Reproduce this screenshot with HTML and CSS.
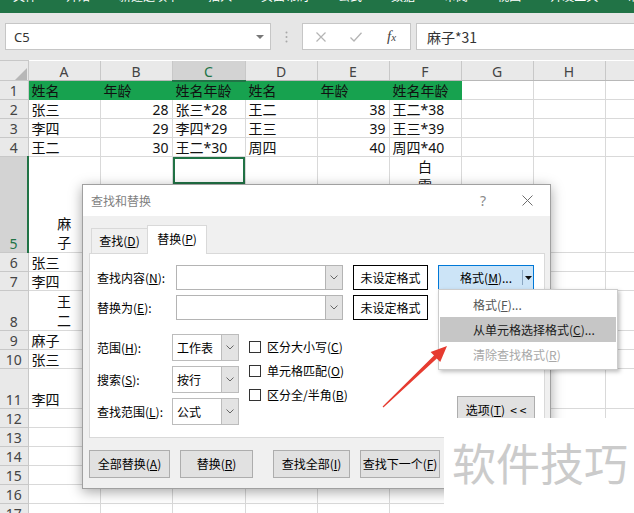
FILE: index.html
```html
<!DOCTYPE html>
<html lang="zh">
<head>
<meta charset="utf-8">
<title>查找和替换</title>
<link rel="stylesheet" href="styles.css">
</head>
<body>
<div class="ribbon">
  <span>文件</span><span>开始</span><span>新建选项卡</span><span>插入</span><span>页面布局</span><span>公式</span><span>数据</span><span>审阅</span><span>视图</span><span>开发工具</span><span>帮助</span>
</div>
<div class="fbar">
  <div class="namebox"><span>C5</span><svg width="8" height="4" viewBox="0 0 8 4"><path d="M0 0H8L4 4Z" fill="#777"/></svg></div>
  <div class="sep"><svg width="3" height="12" viewBox="0 0 3 12"><circle cx="1.5" cy="1.5" r="1" fill="#a8a8a8"/><circle cx="1.5" cy="6" r="1" fill="#a8a8a8"/><circle cx="1.5" cy="10.5" r="1" fill="#a8a8a8"/></svg></div>
  <div class="fbtns">
    <svg class="ic-x" width="10" height="10" viewBox="0 0 10 10"><path d="M0.5 0.5L9.5 9.5M9.5 0.5L0.5 9.5" stroke="#b4b4b4" stroke-width="1.2"/></svg>
    <svg class="ic-ok" width="12" height="10" viewBox="0 0 12 10"><path d="M0.5 5.5L4 9L11.5 0.8" fill="none" stroke="#b4b4b4" stroke-width="1.3"/></svg>
    <span class="fx"><i>f</i><i class="sx">x</i></span>
  </div>
  <div class="finput">麻子*31</div>
</div>

<table class="sheet">
  <colgroup>
    <col class="w-rh"><col class="w-c"><col class="w-c"><col class="w-cc"><col class="w-c"><col class="w-c"><col class="w-c"><col class="w-c"><col class="w-c"><col class="w-r">
  </colgroup>
  <tr class="h20">
    <th class="corner"><svg width="12" height="12" viewBox="0 0 12 12"><path d="M12 0V12H0Z" fill="#b7b7b7"/></svg></th>
    <th class="ch">A</th><th class="ch">B</th><th class="ch act">C</th><th class="ch">D</th><th class="ch">E</th><th class="ch">F</th><th class="ch">G</th><th class="ch">H</th><th class="ch"></th>
  </tr>
  <tr class="h19"><th>1</th><td class="g">姓名</td><td class="g">年龄</td><td class="g">姓名年龄</td><td class="g">姓名</td><td class="g">年龄</td><td class="g">姓名年龄</td><td></td><td></td><td></td></tr>
  <tr class="h19"><th>2</th><td>张三</td><td class="n">28</td><td>张三*28</td><td>王二</td><td class="n">38</td><td>王二*38</td><td></td><td></td><td></td></tr>
  <tr class="h19"><th>3</th><td>李四</td><td class="n">29</td><td>李四*29</td><td>王三</td><td class="n">39</td><td>王三*39</td><td></td><td></td><td></td></tr>
  <tr class="h19"><th>4</th><td>王二</td><td class="n">30</td><td>王二*30</td><td>周四</td><td class="n">40</td><td>周四*40</td><td></td><td></td><td></td></tr>
  <tr class="h96"><th class="ract">5</th><td class="c">麻<br>子</td><td></td><td class="sel"></td><td></td><td></td><td class="c">白<br>雪<br>*<br>4<br>1</td><td></td><td></td><td></td></tr>
  <tr class="h19"><th>6</th><td>张三</td><td></td><td></td><td></td><td></td><td></td><td></td><td></td><td></td></tr>
  <tr class="h19"><th>7</th><td>李四</td><td></td><td></td><td></td><td></td><td></td><td></td><td></td><td></td></tr>
  <tr class="h40"><th>8</th><td class="c">王<br>二</td><td></td><td></td><td></td><td></td><td></td><td></td><td></td><td></td></tr>
  <tr class="h19"><th>9</th><td>麻子</td><td></td><td></td><td></td><td></td><td></td><td></td><td></td><td></td></tr>
  <tr class="h19"><th>10</th><td>张三</td><td></td><td></td><td></td><td></td><td></td><td></td><td></td><td></td></tr>
  <tr class="h40"><th>11</th><td>李四</td><td></td><td></td><td></td><td></td><td></td><td></td><td></td><td></td></tr>
  <tr class="h19"><th>12</th><td></td><td></td><td></td><td></td><td></td><td></td><td></td><td></td><td></td></tr>
  <tr class="h19"><th>13</th><td></td><td></td><td></td><td></td><td></td><td></td><td></td><td></td><td></td></tr>
  <tr class="h19"><th>14</th><td></td><td></td><td></td><td></td><td></td><td></td><td></td><td></td><td></td></tr>
  <tr class="h19"><th>15</th><td></td><td></td><td></td><td></td><td></td><td></td><td></td><td></td><td></td></tr>
  <tr class="h19"><th>16</th><td></td><td></td><td></td><td></td><td></td><td></td><td></td><td></td><td></td></tr>
  <tr class="h19"><th>17</th><td></td><td></td><td></td><td></td><td></td><td></td><td></td><td></td><td></td></tr>
</table>

<div class="dialog">
  <div class="dlg-title">
    <span>查找和替换</span>
    <span class="help">?</span>
    <svg class="close" width="11" height="11" viewBox="0 0 11 11"><path d="M0.5 0.5L10.5 10.5M10.5 0.5L0.5 10.5" stroke="#6e6e6e" stroke-width="1"/></svg>
  </div>
  <div class="dlg-body">
    <div class="tabs">
      <div class="tab">查找(<u>D</u>)</div>
      <div class="tab active">替换(<u>P</u>)</div>
    </div>
    <div class="panel">
      <div class="frows">
        <span class="lab">查找内容(<u>N</u>):</span>
        <div class="combo"><div class="arr"><svg width="8" height="5" viewBox="0 0 8 5"><path d="M0.5 0.5L4 4L7.5 0.5" fill="none" stroke="#666"/></svg></div></div>
        <div class="fmt-none">未设定格式</div>
        <div class="fmt-btn"><span class="lbl">格式(<u>M</u>)...</span><span class="dv"></span><span class="dd"><svg width="7" height="4" viewBox="0 0 7 4"><path d="M0 0H7L3.5 4Z" fill="#111"/></svg></span></div>
        <span class="lab">替换为(<u>E</u>):</span>
        <div class="combo"><div class="arr"><svg width="8" height="5" viewBox="0 0 8 5"><path d="M0.5 0.5L4 4L7.5 0.5" fill="none" stroke="#666"/></svg></div></div>
        <div class="fmt-none">未设定格式</div>
      </div>
      <div class="opts">
        <div class="ogrid">
          <span class="lab">范围(<u>H</u>):</span>
          <div class="sel"><span class="v">工作表</span><span class="arr"><svg width="8" height="5" viewBox="0 0 8 5"><path d="M0.5 0.5L4 4L7.5 0.5" fill="none" stroke="#666"/></svg></span></div>
          <span class="lab">搜索(<u>S</u>):</span>
          <div class="sel"><span class="v">按行</span><span class="arr"><svg width="8" height="5" viewBox="0 0 8 5"><path d="M0.5 0.5L4 4L7.5 0.5" fill="none" stroke="#666"/></svg></span></div>
          <span class="lab">查找范围(<u>L</u>):</span>
          <div class="sel"><span class="v">公式</span><span class="arr"><svg width="8" height="5" viewBox="0 0 8 5"><path d="M0.5 0.5L4 4L7.5 0.5" fill="none" stroke="#666"/></svg></span></div>
        </div>
        <div class="checks">
          <div class="chk"><span class="box"></span><span>区分大小写(<u>C</u>)</span></div>
          <div class="chk"><span class="box"></span><span>单元格匹配(<u>O</u>)</span></div>
          <div class="chk"><span class="box"></span><span>区分全/半角(<u>B</u>)</span></div>
        </div>
        <div class="btn btn-opt">选项(<u>T</u>)&nbsp; &lt; &lt;</div>
      </div>
    </div>
    <div class="actions">
      <div class="btn b-all">全部替换(<u>A</u>)</div>
      <div class="btn b-rep">替换(<u>R</u>)</div>
      <div class="btn b-fall">查找全部(<u>I</u>)</div>
      <div class="btn b-next">查找下一个(<u>F</u>)</div>
    </div>
  </div>
</div>

<div class="menu">
  <div class="mi first">格式(<u>F</u>)...</div>
  <div class="mi hl">从单元格选择格式(<u>C</u>)...</div>
  <div class="mi dis">清除查找格式(<u>R</u>)</div>
</div>

<svg class="arrow" width="634" height="513" viewBox="0 0 634 513">
  <polygon points="382.6,406.6 434,355.6 430.6,351.9 447,346 440.2,362.1 436.8,358.5 383.4,407.4" fill="#e63b30"/>
</svg>

<div class="wm">软件技巧</div>
</body>
</html>
```

FILE: styles.css
```css
html, body {
  margin: 0;
  padding: 0;
}
body {
  width: 634px;
  height: 513px;
  overflow: hidden;
  position: relative;
  background: #fff;
  font-family: "Noto Sans", "Noto Sans CJK SC", sans-serif;
}

/* ribbon tabs (cut off at the top) */
.ribbon {
  height: 13px;
  background: #217346;
  display: flex;
  align-items: flex-start;
  gap: 29px;
  padding-left: 13px;
  overflow: hidden;
  color: #fff;
  font-family: "Noto Sans CJK SC", sans-serif;
  font-size: 12px;
  line-height: 12px;
  white-space: nowrap;
}
.ribbon span {
  margin-top: -10px;
}

/* formula bar */
.fbar {
  height: 47px;
  box-sizing: border-box;
  padding: 10px 0 10px 5px;
  background: #e6e6e6;
  display: flex;
}
.namebox {
  width: 266px;
  box-sizing: border-box;
  border: 1px solid #c6c6c6;
  background: #fff;
  display: flex;
  align-items: center;
  justify-content: space-between;
  padding: 0 6px 0 8px;
  font-size: 13px;
  color: #333;
}
.sep {
  width: 31px;
  display: flex;
  align-items: center;
  justify-content: center;
}
.fbtns {
  width: 109px;
  box-sizing: border-box;
  border: 1px solid #c6c6c6;
  background: #fff;
  display: flex;
  align-items: center;
  padding-left: 13px;
}
.ic-ok {
  margin-left: 24px;
}
.fx {
  margin-left: 25px;
  font-family: "Liberation Serif", serif;
  font-size: 15px;
  color: #444;
}
.fx .sx {
  font-size: 11px;
}
.finput {
  flex: 1;
  margin-left: 5px;
  box-sizing: border-box;
  border: 1px solid #c6c6c6;
  border-right: none;
  background: #fff;
  display: flex;
  align-items: center;
  padding-left: 10px;
  font-size: 14px;
  color: #333;
  font-family: "Noto Sans CJK SC", sans-serif;
}

/* sheet grid */
.sheet {
  border-collapse: collapse;
  table-layout: fixed;
  width: 642px;
}
.w-rh { width: 28px; }
.w-c { width: 72px; }
.w-cc { width: 73px; }
.w-r { width: 37px; }
.h20 { height: 20px; }
.h19 { height: 19px; }
.h40 { height: 40px; }
.h96 { height: 96px; }
.sheet td {
  border: 1px solid #d9d9d9;
  padding: 0 3px 0 3px;
  font-size: 14px;
  line-height: 17px;
  vertical-align: bottom;
  white-space: nowrap;
  overflow: hidden;
  color: #111;
  font-family: "Noto Sans", "Noto Sans CJK SC", sans-serif;
}
.sheet th {
  background: #e9e9e9;
  border: 1px solid #c8c8c8;
  border-left: none;
  font-weight: normal;
  font-size: 14px;
  line-height: 17px;
  color: #444;
  text-align: center;
  vertical-align: bottom;
  padding: 0;
  font-family: "Noto Sans", sans-serif;
}
.sheet th.ch {
  border-bottom: 1px solid #b8b8b8;
  border-top: none;
}
.sheet th.corner {
  text-align: right;
  vertical-align: bottom;
  padding: 0 1px 0 0;
  line-height: 0;
}
.sheet th.act {
  background: #d3d3d3;
  color: #217346;
  border-bottom: 2px solid #217346;
}
.sheet th.ract {
  background: #d3d3d3;
  color: #217346;
  border-right: 2px solid #217346;
}
.sheet td.g {
  background: #17a24f;
  border-color: #17a24f;
}
.sheet td.n {
  text-align: right;
}
.sheet td.c {
  text-align: center;
  line-height: 19px;
}
.sheet td.sel {
  border: 2px solid #217346;
}

/* dialog */
.dialog {
  position: absolute;
  left: 82px;
  top: 184px;
  width: 469px;
  box-sizing: border-box;
  border: 1px solid #a0a0a0;
  background: #f0f0f0;
  box-shadow: 0 3px 12px rgba(0, 0, 0, 0.35);
  font-family: "Noto Sans CJK SC", sans-serif;
  font-size: 12px;
  line-height: 16px;
  color: #000;
}
.dlg-title {
  height: 31px;
  background: #fff;
  display: flex;
  align-items: center;
  padding: 0 17px 0 8px;
  color: #7f7f7f;
}
.help {
  margin-left: auto;
  margin-right: 36px;
  font-size: 14px;
  color: #8a8a8a;
  font-family: "Noto Sans", sans-serif;
}
.dlg-body {
  padding: 9px 5px 10px 6px;
}
.tabs {
  display: flex;
  align-items: flex-end;
  height: 28px;
  padding-left: 2px;
}
.tab {
  width: 56px;
  height: 25px;
  box-sizing: border-box;
  border: 1px solid #d9d9d9;
  border-bottom: none;
  border-right: none;
  display: flex;
  align-items: center;
  justify-content: center;
  background: #f0f0f0;
}
.tab.active {
  width: 60px;
  height: 29px;
  margin-bottom: -1px;
  background: #fff;
  border-right: 1px solid #d9d9d9;
  position: relative;
  z-index: 1;
  padding-bottom: 2px;
}
.panel {
  border: 1px solid #d9d9d9;
  background: #fff;
  padding: 11px 9px 12px 7px;
}
.lab {
  white-space: nowrap;
}
.frows {
  display: grid;
  grid-template-columns: 69px 167px 75px 96px;
  grid-auto-rows: 25px;
  column-gap: 10px;
  row-gap: 5px;
  align-items: center;
}
.combo {
  height: 25px;
  box-sizing: border-box;
  border: 1px solid #b4b4b4;
  background: #fff;
  display: flex;
  justify-content: flex-end;
}
.combo .arr {
  width: 16px;
  background: #e3e3e3;
  border-left: 1px solid #b4b4b4;
  display: flex;
  align-items: center;
  justify-content: center;
}
.fmt-none {
  height: 25px;
  box-sizing: border-box;
  border: 1px solid #000;
  display: flex;
  align-items: center;
  justify-content: center;
}
.fmt-btn {
  height: 25px;
  box-sizing: border-box;
  border: 1px solid #0078d7;
  background: #cce4f7;
  display: flex;
  align-items: center;
}
.fmt-btn .lbl {
  flex: 1;
  text-align: right;
  padding-right: 10px;
}
.fmt-btn .dv {
  width: 1px;
  height: 15px;
  background: #8aa6c1;
}
.fmt-btn .dd {
  width: 10px;
  display: flex;
  align-items: center;
  justify-content: center;
}
.opts {
  display: flex;
  align-items: flex-start;
  margin-top: 14px;
}
.ogrid {
  display: grid;
  grid-template-columns: 65px 67px;
  grid-auto-rows: 27px;
  column-gap: 10px;
  row-gap: 5px;
  align-items: center;
}
.sel {
  height: 27px;
  box-sizing: border-box;
  border: 1px solid #bcbcbc;
  background: #fff;
  display: flex;
}
.sel .v {
  flex: 1;
  padding-left: 4px;
  display: flex;
  align-items: center;
}
.sel .arr {
  width: 16px;
  background: #e3e3e3;
  border-left: 1px solid #bcbcbc;
  display: flex;
  align-items: center;
  justify-content: center;
}
.checks {
  margin-left: 10px;
  padding-top: 4px;
  display: flex;
  flex-direction: column;
  gap: 6px;
}
.chk {
  height: 18px;
  display: flex;
  align-items: center;
  gap: 6px;
}
.chk .box {
  width: 12px;
  height: 12px;
  box-sizing: border-box;
  border: 1px solid #333;
  background: #fff;
}
.btn {
  box-sizing: border-box;
  background: #e1e1e1;
  border: 1px solid #adadad;
  display: flex;
  align-items: center;
  justify-content: center;
  white-space: nowrap;
}
.btn-opt {
  margin-left: auto;
  align-self: flex-end;
  width: 78px;
  height: 27px;
  margin-bottom: 2px;
}
.actions {
  display: flex;
  margin-top: 12px;
}
.actions .btn {
  height: 28px;
}
.b-all { width: 81px; margin-right: 10px; }
.b-rep { width: 73px; margin-right: 20px; }
.b-fall { width: 77px; margin-right: 10px; }
.b-next { width: 80px; }

/* dropdown menu */
.menu {
  position: absolute;
  left: 438px;
  top: 289px;
  width: 180px;
  box-sizing: border-box;
  border: 1px solid #cccccc;
  background: #fff;
  box-shadow: 2px 2px 4px rgba(0, 0, 0, 0.25);
  padding: 2px 1px;
  font-family: "Noto Sans CJK SC", sans-serif;
  font-size: 12px;
}
.mi {
  height: 25px;
  display: flex;
  align-items: center;
  padding-left: 33px;
  color: #222;
}
.mi.first {
  color: #555;
}
.mi.hl {
  background: #c6c6c6;
  color: #1a1a1a;
}
.mi.dis {
  color: #a8a8a8;
}

/* red arrow annotation */
.arrow {
  position: absolute;
  left: 0;
  top: 0;
  pointer-events: none;
}

/* watermark */
.wm {
  position: absolute;
  left: 444px;
  top: 418px;
  width: 190px;
  height: 95px;
  box-sizing: border-box;
  background: #fff;
  padding-left: 8px;
  font-family: "Noto Sans CJK SC", sans-serif;
  font-size: 44px;
  line-height: 88px;
  color: #cbcbcb;
  white-space: nowrap;
}
```
